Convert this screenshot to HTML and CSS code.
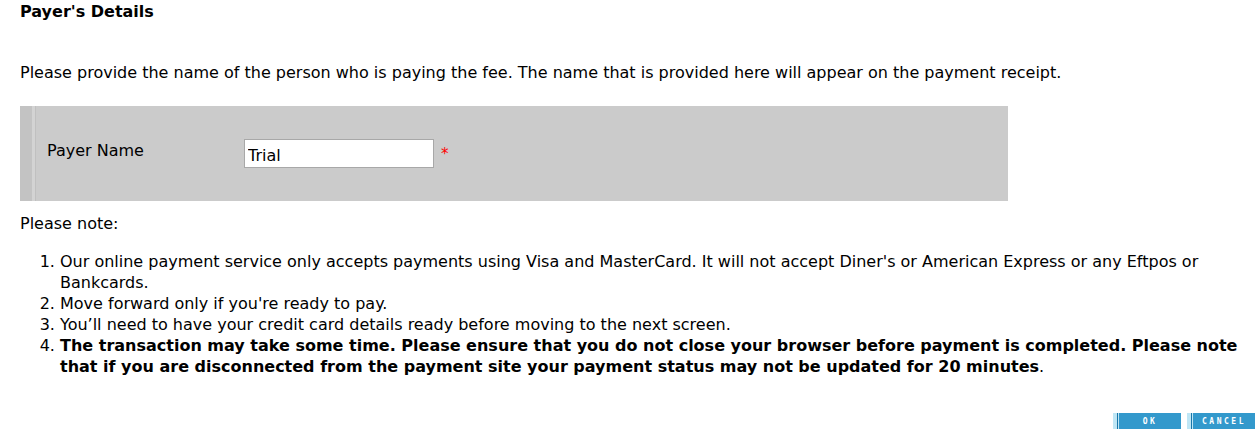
FILE: index.html
```html
<!DOCTYPE html>
<html>
<head>
<meta charset="utf-8">
<link rel="stylesheet" href="styles.css">
</head>
<body>
<div class="page">
  <h1 class="title">Payer's Details</h1>
  <p class="intro">Please provide the name of the person who is paying the fee. The name that is provided here will appear on the payment receipt.</p>
  <div class="panel">
    <div class="row">
      <label class="label">Payer Name</label>
      <input class="field" type="text" value="Trial">
      <span class="req">*</span>
    </div>
  </div>
  <p class="note">Please note:</p>
  <ol class="list">
    <li>Our online payment service only accepts payments using Visa and MasterCard. It will not accept Diner's or American Express or any Eftpos or Bankcards.</li>
    <li>Move forward only if you're ready to pay.</li>
    <li>You’ll need to have your credit card details ready before moving to the next screen.</li>
    <li><b>The transaction may take some time. Please ensure that you do not close your browser before payment is completed. Please note that if you are disconnected from the payment site your payment status may not be updated for 20 minutes</b>.</li>
  </ol>
  <div class="actions">
    <button class="btn">OK</button>
    <button class="btn">CANCEL</button>
  </div>
</div>
</body>
</html>
```
FILE: styles.css
```css
html, body { margin: 0; padding: 0; background: #fff; }
body { font-family: "DejaVu Sans", Verdana, sans-serif; font-size: 16px; color: #000; }
.page { padding: 2px 5px 0 20px; }
.title { font-size: 16px; font-weight: bold; margin: 0; line-height: 20px; }
.intro { margin: 41px 0 0 0; line-height: 20px; }
.panel {
  margin-top: 23px;
  width: 988px; height: 95px;
  background: #cbcbcb;
  box-sizing: border-box;
  border-left: 12px solid #c3c3c3;
  box-shadow: inset 3px 0 0 #d3d3d3, inset 4px 0 0 #c0c0c0;
  display: flex; align-items: center;
}
.row { display: flex; align-items: center; padding-left: 15px; margin-top: 0; }
.label { width: 197px; margin-top: -7px; }
.field {
  width: 190px; height: 29px; box-sizing: border-box;
  border: 1px solid #a8a8a8; background: #fff;
  font-family: "DejaVu Sans", Verdana, sans-serif; font-size: 16px; color: #000;
  padding: 3px 3px 0; margin: 0;
}
.req { color: #f00; margin-left: 7px; font-size: 15px; }
.note { margin: 13px 0 0 0; line-height: 20px; }
.list { margin: 17px 0 0 0; padding-left: 40px; line-height: 21px; width: 1193px; }
.actions { display: flex; justify-content: flex-end; gap: 6px; margin-top: 36px; }
.btn {
  width: 68px; height: 16px; padding: 0 0 0 6px; border: 0;
  background: #3399cc;
  box-shadow: inset 4px 0 0 #bfe6f5, inset 5px 0 0 #1a77aa, inset 6px 0 0 #bfe6f5;
  color: #fff; font-family: "DejaVu Sans Mono", monospace; font-size: 8px; font-weight: bold; letter-spacing: 2.5px;
}
```
